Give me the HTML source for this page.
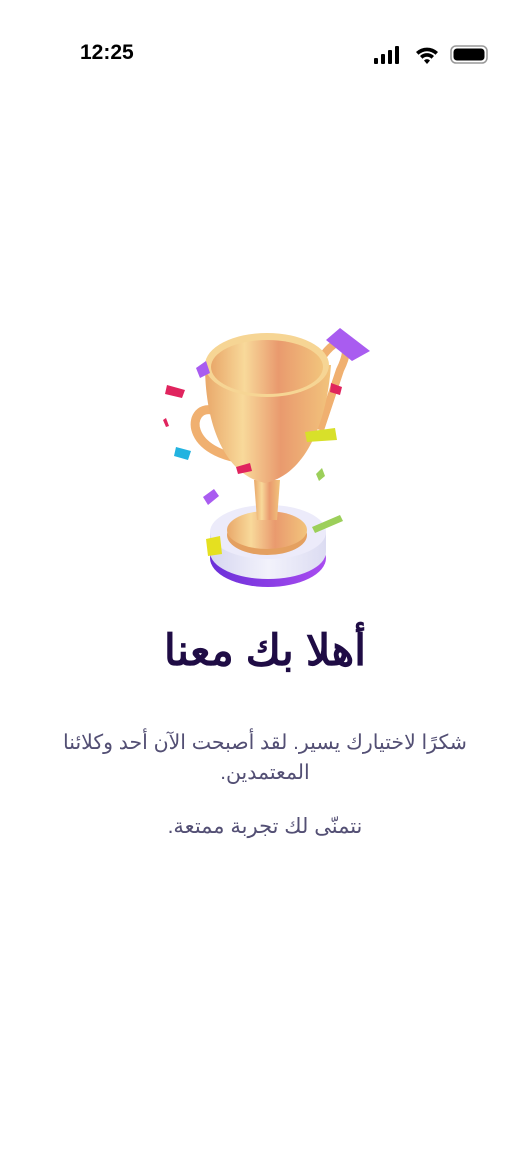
<!DOCTYPE html>
<html><head><meta charset="utf-8"><style>
body{margin:0;width:530px;height:1149px;background:#fff;position:relative;overflow:hidden;font-family:"Liberation Sans","Noto Sans CJK SC",sans-serif}
.t{position:absolute;left:0;width:530px;text-align:center;direction:rtl}
</style></head><body>
<div style="position:absolute;left:80px;top:41px;font-size:21px;font-weight:bold;color:#000">12:25</div>
<svg style="position:absolute;left:370px;top:42px" width="122" height="26">
<rect x="4" y="16" width="4" height="6" rx="1"/><rect x="11" y="12" width="4" height="10" rx="1"/><rect x="18" y="8" width="4" height="14" rx="1"/><rect x="25" y="4" width="4" height="18" rx="1"/>
<path d="M46 10a16 16 0 0 1 22 0l-2.5 2.8a12 12 0 0 0-17 0z M50 14a10 10 0 0 1 14 0l-2.5 2.8a6 6 0 0 0-9 0z M54 18.5a4 4 0 0 1 6 0l-3 3.5z"/>
<rect x="81" y="4" width="36" height="17" rx="5" fill="none" stroke="#999" stroke-width="1.5"/><rect x="83.5" y="6.5" width="31" height="12" rx="3.5"/>
</svg>
<svg style="position:absolute;left:0;top:0" width="530" height="620">
<defs>
<linearGradient id="g" x1="0" x2="1"><stop offset="0" stop-color="#e9a86a"/><stop offset=".3" stop-color="#f8d99a"/><stop offset=".6" stop-color="#e99a6e"/><stop offset="1" stop-color="#f2c47c"/></linearGradient>
<linearGradient id="p" x1="0" x2="1"><stop offset="0" stop-color="#6a2fd8"/><stop offset="1" stop-color="#a94cf0"/></linearGradient>
<linearGradient id="w" x1="0" x2="1"><stop offset="0" stop-color="#d6d6f0"/><stop offset=".5" stop-color="#f2f2fb"/><stop offset="1" stop-color="#dcdcf2"/></linearGradient>
</defs>
<ellipse cx="268" cy="558" rx="58" ry="29" fill="url(#p)"/>
<rect x="210" y="532" width="116" height="20" fill="url(#w)"/>
<ellipse cx="268" cy="552" rx="58" ry="27" fill="url(#w)"/>
<ellipse cx="268" cy="532" rx="58" ry="27" fill="#ecebfa"/>
<ellipse cx="267" cy="535" rx="40" ry="20" fill="#e4a060"/>
<ellipse cx="267" cy="530" rx="40" ry="19" fill="url(#g)"/>
<path d="M254 480h26l-3 40h-20z" fill="url(#g)"/>
<path d="M212 410c-25-5-30 45 40 50" fill="none" stroke="#f0b070" stroke-width="9"/>
<path d="M320 360c20-30 35-20 20 10l-20 60" fill="none" stroke="#f0b070" stroke-width="8"/>
<path d="M205 365c0 60 20 110 60 118c40-8 62-60 66-118z" fill="url(#g)"/>
<ellipse cx="267" cy="365" rx="62" ry="32" fill="#f6d594"/>
<ellipse cx="267" cy="367" rx="56" ry="27" fill="url(#g)"/>
<path d="M326 340l14-12 30 23-18 10z" fill="#a95cf0"/>
<path d="M167 385l18 5-3 8-17-4z" fill="#e0245e"/>
<path d="M196 368l10-7 4 12-10 5z" fill="#a95cf0"/>
<path d="M176 447l15 4-3 9-14-4z" fill="#22b3e0"/>
<path d="M305 432l30-4 2 12-30 2z" fill="#d8e02a"/>
<path d="M203 497l11-8 5 7-11 9z" fill="#a95cf0"/>
<path d="M206 539l14-3 2 18-14 2z" fill="#e5e020"/>
<path d="M312 527l28-12 3 6-28 12z" fill="#9ccf5a"/>
<path d="M236 467l14-4 2 8-14 3z" fill="#e0245e"/>
<path d="M331 383l11 4-2 8-10-3z" fill="#e0245e"/>
<path d="M316 474l6-6 3 8-6 5z" fill="#9ccf5a"/>
<path d="M163 420l3-2 3 8-3 1z" fill="#e0245e"/>
</svg>
<div class="t" style="top:626px;font-size:43px;font-weight:bold;color:#1f0c45">أهلا بك معنا</div>
<div class="t" style="top:728px;font-size:20.5px;line-height:30px;color:#534f74;padding:0 62px;box-sizing:border-box">شكرًا لاختيارك يسير. لقد أصبحت الآن أحد وكلائنا المعتمدين.</div>
<div class="t" style="top:812px;font-size:21px;line-height:30px;color:#534f74">نتمنّى لك تجربة ممتعة.</div>
</body></html>
